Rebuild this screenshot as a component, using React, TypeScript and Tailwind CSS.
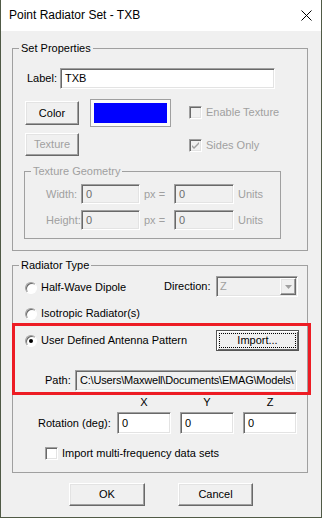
import type { ReactNode } from "react";

// classic win32 bevels
const sunken =
  "border border-t-[#a0a0a0] border-l-[#a0a0a0] border-r-white border-b-white shadow-[inset_1px_1px_0_#696969,inset_-1px_-1px_0_#e3e3e3]";
const raised =
  "border border-t-white border-l-white border-r-[#696969] border-b-[#696969] shadow-[inset_-1px_-1px_0_#a0a0a0,inset_1px_1px_0_#e3e3e3] bg-[#f0f0f0]";

function Group({ title, className, children }: { title: string; className: string; children: ReactNode }) {
  return (
    <div className={`relative border border-[#a0a0a0] ${className}`}>
      <span className="absolute -top-[8px] left-[6px] bg-[#f0f0f0] px-[2px] leading-[14px]">{title}</span>
      {children}
    </div>
  );
}

function Field({ value, className, muted }: { value: string; className: string; muted?: boolean }) {
  return (
    <div
      className={`flex items-center overflow-hidden whitespace-nowrap pl-[4px] ${sunken} ${className} ${
        muted ? "text-[#6d6d6d]" : "text-black"
      }`}
    >
      {value}
    </div>
  );
}

function Button({
  children,
  className,
  disabled,
}: {
  children: ReactNode;
  className: string;
  disabled?: boolean;
}) {
  return (
    <div
      className={`flex items-center justify-center ${raised} ${className} ${
        disabled ? "text-[#a0a0a0]" : "text-black"
      }`}
    >
      {children}
    </div>
  );
}

function Check({ checked, disabled }: { checked?: boolean; disabled?: boolean }) {
  return (
    <div
      className={`flex h-[13px] w-[13px] shrink-0 items-center justify-center ${sunken} ${
        disabled ? "bg-[#f0f0f0]" : "bg-white"
      }`}
    >
      {checked && (
        <svg width="9" height="9" viewBox="0 0 9 9">
          <path d="M1 4l2 2 5-5v2l-5 5-2-2z" fill={disabled ? "#a0a0a0" : "#000"} />
        </svg>
      )}
    </div>
  );
}

function Radio({ checked }: { checked?: boolean }) {
  return (
    <div
      className="flex h-[12px] w-[12px] shrink-0 items-center justify-center rounded-full border border-t-[#a0a0a0] border-l-[#a0a0a0] border-r-white border-b-white bg-white shadow-[inset_1px_1px_0_#696969]"
    >
      {checked && <div className="h-[4px] w-[4px] rounded-full bg-black" />}
    </div>
  );
}

export default function App() {
  return (
    <div className="flex h-[518px] w-[322px] flex-col border-x border-b border-[#505a46] bg-[#f0f0f0] font-['Liberation_Sans',Arial,sans-serif] text-[11px] leading-[13px] text-black">
      {/* title bar */}
      <div className="flex h-[31px] shrink-0 items-center justify-between bg-white pl-[8px] pr-[9px]">
        <span className="text-[12px]">Point Radiator Set - TXB</span>
        <svg width="11" height="11" viewBox="0 0 11 11">
          <path d="M0.5 0.5l10 10M10.5 0.5l-10 10" stroke="#000" strokeWidth="1" />
        </svg>
      </div>

      <div className="pl-[11px] pt-[17px]">
        <Group title="Set Properties" className="h-[203px] w-[296px]">
          <div className="ml-[14px] mt-[19px] flex h-[21px] items-center">
            <span className="w-[33px]">Label:</span>
            <Field value="TXB" className="h-[21px] w-[215px] bg-white" />
          </div>

          <div className="ml-[12px] mt-[10px] flex h-[28px] items-start">
            <Button className="mt-[2px] h-[24px] w-[54px]">Color</Button>
            <div className="ml-[11px] flex h-[28px] w-[81px] items-stretch border border-[#a0a0a0] bg-[#fafafa] p-[3px]">
              <div className="flex-1 bg-[#0000ff]" />
            </div>
            <div className="ml-[18px] mt-[7px] flex items-center gap-[4px] text-[#a0a0a0]">
              <Check disabled />
              <span>Enable Texture</span>
            </div>
          </div>

          <div className="ml-[12px] mt-[6px] flex h-[23px] items-start">
            <Button className="h-[23px] w-[54px]" disabled>
              Texture
            </Button>
            <div className="ml-[110px] mt-[6px] flex items-center gap-[4px] text-[#a0a0a0]">
              <Check checked disabled />
              <span>Sides Only</span>
            </div>
          </div>

          <Group title="Texture Geometry" className="ml-[11px] mt-[15px] h-[68px] w-[257px] text-[#a0a0a0]">
            {["Width:", "Height:"].map((label, i) => (
              <div key={label} className={`ml-[21px] flex h-[20px] items-center ${i === 0 ? "mt-[12px]" : "mt-[6px]"}`}>
                <span className="w-[35px]">{label}</span>
                <Field value="0" muted className="h-[20px] w-[59px] bg-[#f0f0f0]" />
                <span className="ml-[4px] w-[30px]">px =</span>
                <Field value="0" muted className="h-[20px] w-[60px] bg-[#f0f0f0]" />
                <span className="ml-[4px]">Units</span>
              </div>
            ))}
          </Group>
        </Group>

        <Group title="Radiator Type" className="mt-[14px] h-[208px] w-[296px]">
          <div className="mt-[10px] flex h-[21px] items-center pl-[12px]">
            <div className="mt-[2px] flex w-[139px] items-center gap-[4px]">
              <Radio />
              <span>Half-Wave Dipole</span>
            </div>
            <span className="w-[52px]">Direction:</span>
            <div className={`flex h-[21px] w-[82px] items-stretch bg-[#f0f0f0] p-[1px] ${sunken}`}>
              <span className="flex flex-1 items-center pl-[2px] text-[#a0a0a0]">Z</span>
              <div className={`flex w-[16px] items-center justify-center ${raised}`}>
                <svg width="7" height="4" viewBox="0 0 7 4">
                  <path d="M0 0h7L3.5 4z" fill="#a0a0a0" />
                </svg>
              </div>
            </div>
          </div>

          <div className="mt-[10px] flex h-[13px] items-center gap-[4px] pl-[12px]">
            <Radio />
            <span>Isotropic Radiator(s)</span>
          </div>

          {/* highlighted section */}
          <div className="-ml-[1px] mt-[3px] h-[72px] w-[299px] border-[3px] border-[#ed1c24]">
            <div className="mt-[4px] flex h-[21px] items-center pl-[10px]">
              <div className="flex w-[191px] items-center gap-[4px]">
                <Radio checked />
                <span>User Defined Antenna Pattern</span>
              </div>
              <div className="flex h-[21px] w-[83px] border border-[#555] bg-[#f0f0f0] p-[2px] shadow-[inset_1px_1px_0_white,inset_-1px_-1px_0_#696969]">
                <div className="flex flex-1 items-center justify-center border border-dotted border-black">Import...</div>
              </div>
            </div>
            <div className="mt-[19px] flex h-[21px] items-center pl-[30px]">
              <span className="w-[30px]">Path:</span>
              <Field
                value="C:\Users\Maxwell\Documents\EMAG\Models\"
                className="h-[21px] w-[222px] bg-[#f0f0f0] tracking-[-0.2px]"
              />
            </div>
          </div>

          <div className="mt-[1px] flex h-[13px] gap-[9px] pl-[104px]">
            {["X", "Y", "Z"].map((axis) => (
              <span key={axis} className="w-[54px] text-center">
                {axis}
              </span>
            ))}
          </div>

          <div className="mt-[3px] flex h-[22px] items-center pl-[25px]">
            <span className="w-[79px]">Rotation (deg):</span>
            <div className="flex gap-[9px]">
              {[0, 1, 2].map((i) => (
                <Field key={i} value="0" className="h-[22px] w-[54px] bg-white" />
              ))}
            </div>
          </div>

          <div className="mt-[13px] flex items-center gap-[4px] pl-[32px]">
            <Check />
            <span>Import multi-frequency data sets</span>
          </div>
        </Group>

        <div className="ml-[57px] mt-[10px] flex gap-[33px]">
          <Button className="h-[23px] w-[76px]">OK</Button>
          <Button className="h-[23px] w-[75px]">Cancel</Button>
        </div>
      </div>
    </div>
  );
}
